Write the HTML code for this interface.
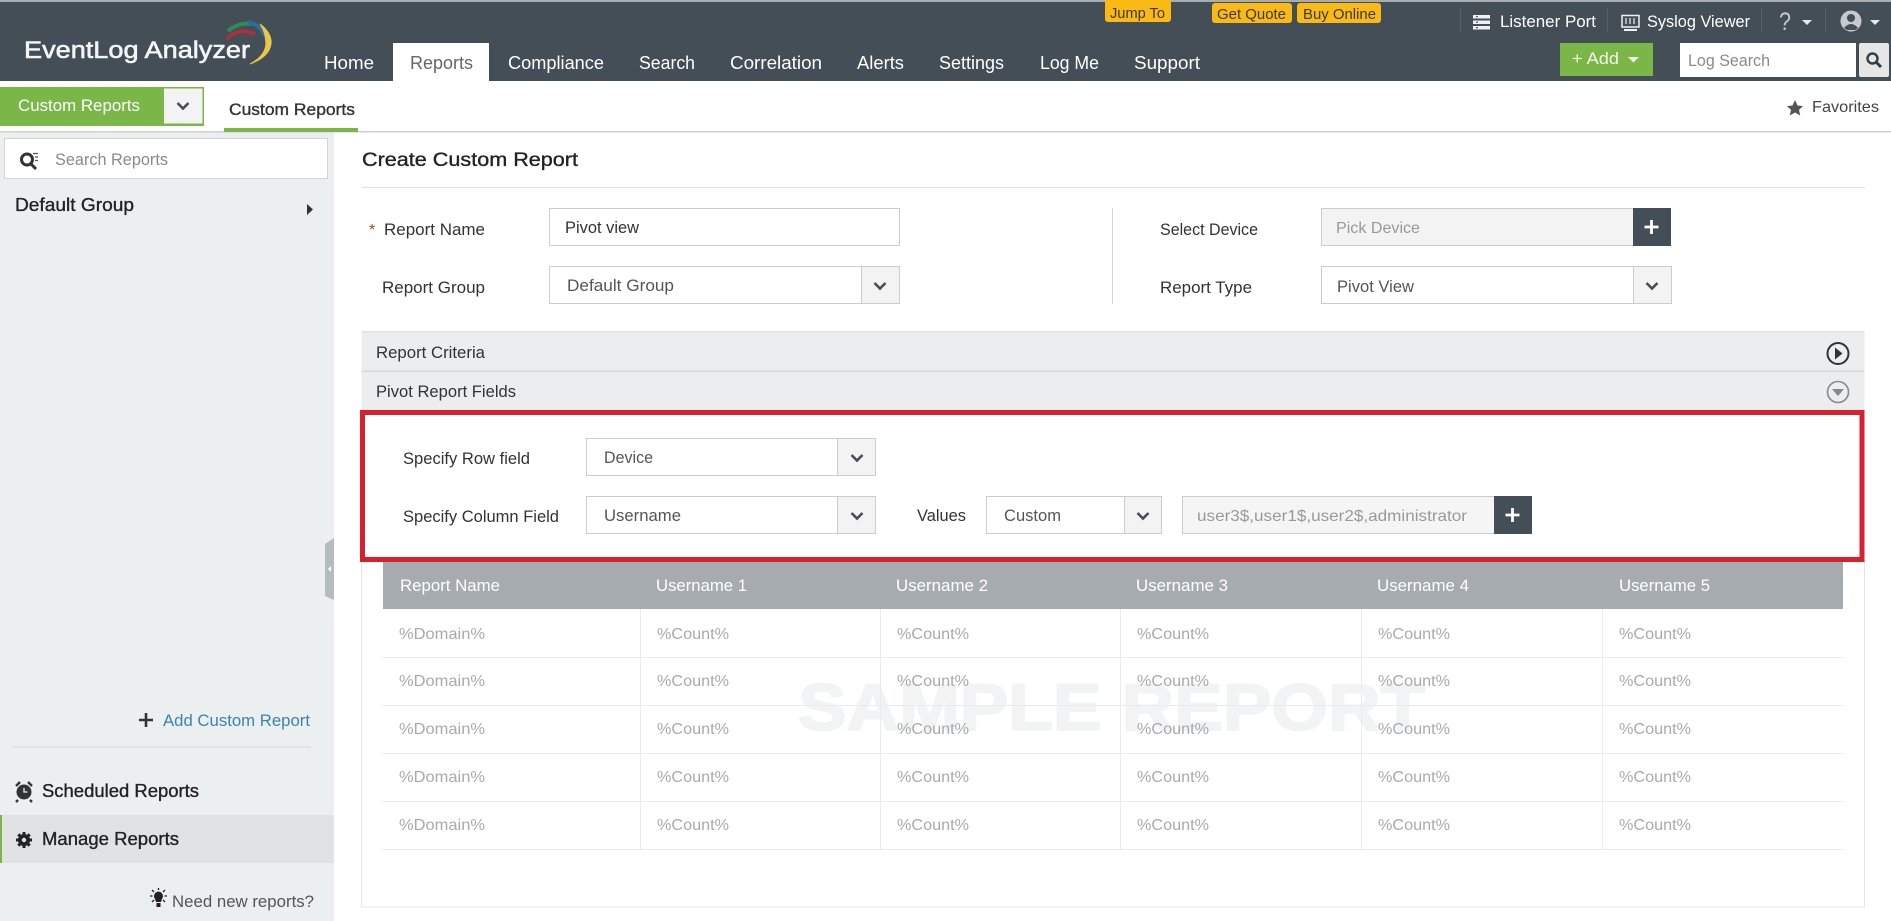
<!DOCTYPE html>
<html lang="en">
<head>
<meta charset="utf-8">
<title>EventLog Analyzer - Create Custom Report</title>
<style>
html,body{margin:0;padding:0;width:1891px;height:921px;overflow:hidden;background:#fff}
svg{display:block}
text{font-family:"Liberation Sans",sans-serif;font-size:16.5px;fill:#333;}
.n{font-size:18px;fill:#fff}
.s{stroke:currentColor;stroke-width:.35px}
.y{font-size:15px;fill:#3a3a2a}
.w{fill:#fff;font-size:16.5px}
.g{fill:#999}
.c{fill:#aaa;font-size:16px}
.h{fill:#fff;font-size:16.5px}
</style>
</head>
<body>
<svg width="1891" height="921" viewBox="0 0 1891 921" xmlns="http://www.w3.org/2000/svg">
<defs>
<g id="chev"><path d="M-5.5 -3 L0 2.5 L5.5 -3" fill="none" stroke="#444f57" stroke-width="2.6"/></g>
<g id="plus"><path d="M-7 0H7M0 -7V7" stroke="#fff" stroke-width="2.8"/></g>
</defs>

<!-- header -->
<rect width="1891" height="81" fill="#434e56"/>
<rect width="1891" height="2" fill="#a9adb0"/>
<!-- logo -->
<text x="24" y="58" textLength="226" lengthAdjust="spacingAndGlyphs" style="font-size:24.5px;fill:#f4f6f6;stroke:#f4f6f6;stroke-width:.6px">EventLog Analyzer</text>
<path d="M227 39Q238 27 255 34" fill="none" stroke="#a8303f" stroke-width="4"/>
<path d="M228 31Q239 22 252 24" fill="none" stroke="#2f8a5a" stroke-width="4"/>
<path d="M248 22Q262 25 267 40" fill="none" stroke="#2a6f9e" stroke-width="4"/>
<path d="M260 24Q272 33 271 44Q269 57 250 64Q265 56 266 44Q266 33 260 24Z" fill="#e8c64a" stroke="#e8c64a" stroke-width="1"/>
<!-- nav -->
<rect x="393" y="43" width="96" height="38" fill="#fff"/>
<text class="n" x="324" y="69" textLength="50" lengthAdjust="spacingAndGlyphs">Home</text>
<text class="n" x="410" y="69" textLength="63" lengthAdjust="spacingAndGlyphs" style="fill:#666">Reports</text>
<text class="n" x="508" y="69" textLength="96" lengthAdjust="spacingAndGlyphs">Compliance</text>
<text class="n" x="639" y="69" textLength="56" lengthAdjust="spacingAndGlyphs">Search</text>
<text class="n" x="730" y="69" textLength="92" lengthAdjust="spacingAndGlyphs">Correlation</text>
<text class="n" x="857" y="69" textLength="47" lengthAdjust="spacingAndGlyphs">Alerts</text>
<text class="n" x="939" y="69" textLength="65" lengthAdjust="spacingAndGlyphs">Settings</text>
<text class="n" x="1040" y="69" textLength="59" lengthAdjust="spacingAndGlyphs">Log Me</text>
<text class="n" x="1134" y="69" textLength="66" lengthAdjust="spacingAndGlyphs">Support</text>
<!-- yellow -->
<rect x="1105" y="-4" width="66" height="26" rx="3" fill="#fbb915"/>
<rect x="1212" y="3" width="80" height="20" rx="3" fill="#fbb915"/>
<rect x="1297" y="3" width="84" height="20" rx="3" fill="#fbb915"/>
<text class="y" x="1110" y="18" textLength="55" lengthAdjust="spacingAndGlyphs">Jump To</text>
<text class="y" x="1217" y="19" textLength="69" lengthAdjust="spacingAndGlyphs">Get Quote</text>
<text class="y" x="1303" y="19" textLength="73" lengthAdjust="spacingAndGlyphs">Buy Online</text>
<!-- top right -->
<path d="M1460.5 8V32M1607.5 8V32M1761.5 8V32M1825.5 8V32" stroke="#56616a" stroke-width="1"/>
<g fill="#eef0f1">
<rect x="1473" y="15" width="17" height="3.5"/><rect x="1473" y="20.5" width="17" height="3.5"/><rect x="1473" y="26" width="17" height="3.5"/>
</g>
<path d="M1476 16.7h2M1476 22.2h2M1476 27.7h2" stroke="#434e56" stroke-width="1.2"/>
<text x="1500" y="27" textLength="96" lengthAdjust="spacingAndGlyphs" style="font-size:17px;fill:#fff">Listener Port</text>
<rect x="1622" y="15.500" width="17" height="11.500" fill="none" stroke="#eef0f1" stroke-width="1.500"/>
<path d="M1626 18v6M1634 18v6M1630 18v6" stroke="#eef0f1" stroke-width="1.200"/>
<path d="M1624 30h13" stroke="#eef0f1" stroke-width="2"/>
<text x="1647" y="27" textLength="103" lengthAdjust="spacingAndGlyphs" style="font-size:17px;fill:#fff">Syslog Viewer</text>
<text x="1779" y="30" textLength="12" lengthAdjust="spacingAndGlyphs" style="font-size:25px;fill:#c6cbce">?</text>
<path d="M1802 20h10l-5 5z" fill="#e6e8e9"/>
<circle cx="1851" cy="21" r="10.500" fill="#c6cacd"/>
<circle cx="1851" cy="18" r="4" fill="#434e56"/>
<path d="M1844 28Q1851 20 1858 28L1855 30H1847Z" fill="#434e56"/>
<path d="M1870 20h10l-5 5z" fill="#e6e8e9"/>
<!-- add -->
<rect x="1560" y="43" width="93" height="33" fill="#7ab648"/>
<text x="1572" y="64" textLength="47" lengthAdjust="spacingAndGlyphs" style="font-size:17px;fill:#f2f7ec">+ Add</text>
<path d="M1628 57h11l-5.5 5.5z" fill="#f2f7ec"/>
<rect x="1680" y="43" width="176" height="34" fill="#fff"/>
<text x="1688" y="66" textLength="82" lengthAdjust="spacingAndGlyphs" style="font-size:16.5px;fill:#8a8a8a">Log Search</text>
<rect x="1859" y="43" width="30" height="34" rx="2" fill="#e6e6e6"/>
<circle cx="1872.500" cy="58.500" r="5" fill="none" stroke="#333f47" stroke-width="2.400"/>
<path d="M1876 62l5 5" stroke="#333f47" stroke-width="3"/>

<!-- sub bar -->
<rect y="131" width="1891" height="1.500" fill="#cfd1d2"/>
<rect x="0" y="87" width="204" height="39" fill="#7ab648"/>
<rect x="164" y="88.500" width="38.500" height="35" fill="#f3f3f3"/>
<use href="#chev" x="183" y="106"/>
<text x="18" y="111" textLength="122" lengthAdjust="spacingAndGlyphs" class="w">Custom Reports</text>
<text x="229" y="115" textLength="126" lengthAdjust="spacingAndGlyphs" class="s" style="color:#333;fill:#333">Custom Reports</text>
<rect x="224" y="128" width="134" height="4" fill="#7ab648"/>
<path d="M1795 100l2.500 5.500 5.500.6-4 3.800 1.200 5.600-5.200-3-5.200 3 1.200-5.600-4-3.800 5.500-.6z" fill="#555"/>
<text x="1812" y="112" textLength="67" lengthAdjust="spacingAndGlyphs" style="font-size:16px;fill:#444">Favorites</text>

<!-- sidebar -->
<rect y="132.500" width="334" height="789" fill="#eceff0"/>
<rect x="4.500" y="138.500" width="323" height="40" fill="#fff" stroke="#d2d4d5"/>
<circle cx="27" cy="159.500" r="5.500" fill="none" stroke="#333" stroke-width="3"/>
<path d="M31 164l5 5" stroke="#333" stroke-width="3"/>
<path d="M33 153.500h5M35 157h3M35 160.500h3" stroke="#555" stroke-width="1.300"/>
<text x="55" y="165" textLength="113" lengthAdjust="spacingAndGlyphs" style="font-size:16.5px;fill:#8a8a8a">Search Reports</text>
<text x="15" y="211" textLength="119" lengthAdjust="spacingAndGlyphs" class="s" style="font-size:18px;color:#222;fill:#222">Default Group</text>
<path d="M307 204l6 5.500-6 5.500z" fill="#333"/>
<path d="M334 538 L325 544 V596 L334 600Z" fill="#b6bbbd"/>
<path d="M331 566l-3 3 3 3z" fill="#fff"/>

<path d="M139 720h14M146 713v14" stroke="#333" stroke-width="2.600"/>
<text x="163" y="726" textLength="147" lengthAdjust="spacingAndGlyphs" style="font-size:16.5px;fill:#3a85a8">Add Custom Report</text>
<rect x="13" y="746.500" width="298" height="1" fill="#d6d8d9"/>
<circle cx="24" cy="792" r="7.500" fill="#333"/>
<path d="M16 786l4-4M32 786l-4-4M18 800l-2 2M30 800l2 2" stroke="#333" stroke-width="2.400"/>
<path d="M24 788v4h3.500" fill="none" stroke="#eceff0" stroke-width="1.300"/>
<text x="42" y="797" textLength="157" lengthAdjust="spacingAndGlyphs" class="s" style="font-size:18px;color:#222;fill:#222">Scheduled Reports</text>
<rect y="815" width="334" height="48" fill="#e0e2e3"/>
<rect y="815" width="2" height="48" fill="#7ab648"/>
<path d="M24 832v16M16 840h16M18.300 834.300l11.400 11.400M29.700 834.300l-11.400 11.400" stroke="#222" stroke-width="3"/>
<circle cx="24" cy="840" r="6" fill="#222"/>
<circle cx="24" cy="840" r="2.200" fill="#e0e2e3"/>
<text x="42" y="845" textLength="137" lengthAdjust="spacingAndGlyphs" class="s" style="font-size:18px;color:#222;fill:#222">Manage Reports</text>
<g transform="translate(0,2)">
<path d="M155 897a4.500 4.500 0 1 1 7 0l-1 3h-5z" fill="#222"/>
<rect x="156.500" y="901" width="4" height="4" fill="#222"/>
<path d="M150 894h2.500M164.500 894h2.500M158.500 888v-2M152 888l2 2M165 888l-2 2M152 900l2-2M165 900l-2-2" stroke="#222" stroke-width="1.300"/>
</g>
<text x="172" y="907" textLength="142" lengthAdjust="spacingAndGlyphs" style="font-size:16.500px;fill:#555">Need new reports?</text>

<!-- main -->
<text x="362" y="166" textLength="216" lengthAdjust="spacingAndGlyphs" class="s" style="font-size:19.500px;color:#222;fill:#222">Create Custom Report</text>
<rect x="362" y="187" width="1503" height="1" fill="#e0e0e0"/>

<text x="369" y="235" style="fill:#c0392b;font-size:16px">*</text>
<text x="384" y="235" textLength="101" lengthAdjust="spacingAndGlyphs">Report Name</text>
<rect x="549.500" y="208.500" width="350" height="37" fill="#fff" stroke="#ccc"/>
<text x="565" y="233" textLength="74" lengthAdjust="spacingAndGlyphs">Pivot view</text>

<text x="382" y="293" textLength="103" lengthAdjust="spacingAndGlyphs">Report Group</text>
<rect x="549.500" y="266.500" width="350" height="37" fill="#fff" stroke="#ccc"/>
<rect x="861" y="267" width="38" height="36" fill="#f3f3f3"/><rect x="861" y="267" width="1" height="36" fill="#ccc"/>
<use href="#chev" x="880" y="286"/>
<text x="567" y="291" textLength="107" lengthAdjust="spacingAndGlyphs" style="fill:#555">Default Group</text>

<rect x="1112" y="208" width="1" height="96" fill="#d5d5d5"/>

<text x="1160" y="235" textLength="98" lengthAdjust="spacingAndGlyphs">Select Device</text>
<rect x="1321.500" y="208.500" width="312" height="37" fill="#f3f3f3" stroke="#ccc"/>
<text x="1336" y="233" textLength="84" lengthAdjust="spacingAndGlyphs" class="g" style="font-size:16px">Pick Device</text>
<rect x="1633" y="208" width="38" height="38" fill="#434e56"/>
<use href="#plus" x="1651.500" y="227"/>

<text x="1160" y="293" textLength="92" lengthAdjust="spacingAndGlyphs">Report Type</text>
<rect x="1321.500" y="266.500" width="350" height="37" fill="#fff" stroke="#ccc"/>
<rect x="1633" y="267" width="38" height="36" fill="#f3f3f3"/><rect x="1633" y="267" width="1" height="36" fill="#ccc"/>
<use href="#chev" x="1652" y="286"/>
<text x="1337" y="292" textLength="77" lengthAdjust="spacingAndGlyphs" style="fill:#555">Pivot View</text>

<rect x="361.500" y="332" width="1503" height="39" fill="#ebedee"/>
<rect x="361.500" y="331" width="1503" height="1.500" fill="#e2e3e4"/>
<rect x="361.500" y="370.500" width="1503" height="1.500" fill="#d6d8d9"/>
<rect x="361.500" y="372" width="1503" height="38" fill="#ebedee"/>
<text x="376" y="358" textLength="109" lengthAdjust="spacingAndGlyphs">Report Criteria</text>
<text x="376" y="397" textLength="140" lengthAdjust="spacingAndGlyphs">Pivot Report Fields</text>
<circle cx="1838" cy="353.500" r="10.500" fill="none" stroke="#333" stroke-width="2"/>
<path d="M1835 347.500l7.500 6-7.500 6z" fill="#333"/>
<circle cx="1838" cy="392" r="10.500" fill="none" stroke="#888" stroke-width="1.600"/>
<path d="M1832 389h12l-6 7z" fill="#888"/>

<!-- panel -->
<rect x="361.500" y="560" width="1503" height="347" fill="#fff" stroke="#e3e4e5"/>

<!-- table -->
<text x="798" y="730" textLength="627" lengthAdjust="spacingAndGlyphs" font-weight="bold" style="font-size:66px;fill:#f2f3f4;stroke:#f2f3f4;stroke-width:2px">SAMPLE REPORT</text>
<rect x="383" y="562" width="1460" height="47" fill="#a5abae"/>
<text class="h" x="400" y="591" textLength="100" lengthAdjust="spacingAndGlyphs">Report Name</text>
<text class="h" x="656" y="591" textLength="91" lengthAdjust="spacingAndGlyphs">Username 1</text>
<text class="h" x="896" y="591" textLength="92" lengthAdjust="spacingAndGlyphs">Username 2</text>
<text class="h" x="1136" y="591" textLength="92" lengthAdjust="spacingAndGlyphs">Username 3</text>
<text class="h" x="1377" y="591" textLength="92" lengthAdjust="spacingAndGlyphs">Username 4</text>
<text class="h" x="1619" y="591" textLength="91" lengthAdjust="spacingAndGlyphs">Username 5</text>
<g fill="#ebebeb">
<rect x="383" y="657" width="1460" height="1"/><rect x="383" y="705" width="1460" height="1"/><rect x="383" y="753" width="1460" height="1"/><rect x="383" y="801" width="1460" height="1"/><rect x="383" y="849" width="1460" height="1"/>
<rect x="640" y="609" width="1" height="240"/><rect x="880" y="609" width="1" height="240"/><rect x="1120" y="609" width="1" height="240"/><rect x="1361" y="609" width="1" height="240"/><rect x="1602" y="609" width="1" height="240"/>
</g>
<g>
<text class="c" x="399" y="639" textLength="86" lengthAdjust="spacingAndGlyphs">%Domain%</text>
<text class="c" x="657" y="639" textLength="72" lengthAdjust="spacingAndGlyphs">%Count%</text>
<text class="c" x="897" y="639" textLength="72" lengthAdjust="spacingAndGlyphs">%Count%</text>
<text class="c" x="1137" y="639" textLength="72" lengthAdjust="spacingAndGlyphs">%Count%</text>
<text class="c" x="1378" y="639" textLength="72" lengthAdjust="spacingAndGlyphs">%Count%</text>
<text class="c" x="1619" y="639" textLength="72" lengthAdjust="spacingAndGlyphs">%Count%</text>
<text class="c" x="399" y="686" textLength="86" lengthAdjust="spacingAndGlyphs">%Domain%</text>
<text class="c" x="657" y="686" textLength="72" lengthAdjust="spacingAndGlyphs">%Count%</text>
<text class="c" x="897" y="686" textLength="72" lengthAdjust="spacingAndGlyphs">%Count%</text>
<text class="c" x="1137" y="686" textLength="72" lengthAdjust="spacingAndGlyphs">%Count%</text>
<text class="c" x="1378" y="686" textLength="72" lengthAdjust="spacingAndGlyphs">%Count%</text>
<text class="c" x="1619" y="686" textLength="72" lengthAdjust="spacingAndGlyphs">%Count%</text>
<text class="c" x="399" y="734" textLength="86" lengthAdjust="spacingAndGlyphs">%Domain%</text>
<text class="c" x="657" y="734" textLength="72" lengthAdjust="spacingAndGlyphs">%Count%</text>
<text class="c" x="897" y="734" textLength="72" lengthAdjust="spacingAndGlyphs">%Count%</text>
<text class="c" x="1137" y="734" textLength="72" lengthAdjust="spacingAndGlyphs">%Count%</text>
<text class="c" x="1378" y="734" textLength="72" lengthAdjust="spacingAndGlyphs">%Count%</text>
<text class="c" x="1619" y="734" textLength="72" lengthAdjust="spacingAndGlyphs">%Count%</text>
<text class="c" x="399" y="782" textLength="86" lengthAdjust="spacingAndGlyphs">%Domain%</text>
<text class="c" x="657" y="782" textLength="72" lengthAdjust="spacingAndGlyphs">%Count%</text>
<text class="c" x="897" y="782" textLength="72" lengthAdjust="spacingAndGlyphs">%Count%</text>
<text class="c" x="1137" y="782" textLength="72" lengthAdjust="spacingAndGlyphs">%Count%</text>
<text class="c" x="1378" y="782" textLength="72" lengthAdjust="spacingAndGlyphs">%Count%</text>
<text class="c" x="1619" y="782" textLength="72" lengthAdjust="spacingAndGlyphs">%Count%</text>
<text class="c" x="399" y="830" textLength="86" lengthAdjust="spacingAndGlyphs">%Domain%</text>
<text class="c" x="657" y="830" textLength="72" lengthAdjust="spacingAndGlyphs">%Count%</text>
<text class="c" x="897" y="830" textLength="72" lengthAdjust="spacingAndGlyphs">%Count%</text>
<text class="c" x="1137" y="830" textLength="72" lengthAdjust="spacingAndGlyphs">%Count%</text>
<text class="c" x="1378" y="830" textLength="72" lengthAdjust="spacingAndGlyphs">%Count%</text>
<text class="c" x="1619" y="830" textLength="72" lengthAdjust="spacingAndGlyphs">%Count%</text>
</g>

<!-- red box -->
<rect x="362.500" y="412.500" width="1499.500" height="147" fill="#fff" stroke="#d8212e" stroke-width="5"/>
<text x="403" y="464" textLength="127" lengthAdjust="spacingAndGlyphs">Specify Row field</text>
<rect x="586.500" y="438.500" width="289" height="37" fill="#fff" stroke="#ccc"/>
<rect x="837" y="439" width="38" height="36" fill="#f3f3f3"/><rect x="837" y="439" width="1" height="36" fill="#ccc"/>
<use href="#chev" x="857" y="458"/>
<text x="604" y="463" textLength="49" lengthAdjust="spacingAndGlyphs" style="fill:#555">Device</text>

<text x="403" y="522" textLength="156" lengthAdjust="spacingAndGlyphs">Specify Column Field</text>
<rect x="586.500" y="496.500" width="289" height="37" fill="#fff" stroke="#ccc"/>
<rect x="837" y="497" width="38" height="36" fill="#f3f3f3"/><rect x="837" y="497" width="1" height="36" fill="#ccc"/>
<use href="#chev" x="857" y="516"/>
<text x="604" y="521" textLength="77" lengthAdjust="spacingAndGlyphs" style="fill:#555">Username</text>

<text x="917" y="521" textLength="49" lengthAdjust="spacingAndGlyphs">Values</text>
<rect x="986.500" y="496.500" width="175" height="37" fill="#fff" stroke="#ccc"/>
<rect x="1124" y="497" width="37" height="36" fill="#f3f3f3"/><rect x="1124" y="497" width="1" height="36" fill="#ccc"/>
<use href="#chev" x="1143" y="516"/>
<text x="1004" y="521" textLength="57" lengthAdjust="spacingAndGlyphs" style="fill:#555">Custom</text>

<rect x="1182.500" y="496.500" width="312" height="37" fill="#f5f5f5" stroke="#ccc"/>
<text x="1197" y="521" textLength="270" lengthAdjust="spacingAndGlyphs" class="g" style="font-size:16px">user3$,user1$,user2$,administrator</text>
<rect x="1494" y="496" width="38" height="38" fill="#434e56"/>
<use href="#plus" x="1512.500" y="515"/>
</svg>
</body>
</html>
